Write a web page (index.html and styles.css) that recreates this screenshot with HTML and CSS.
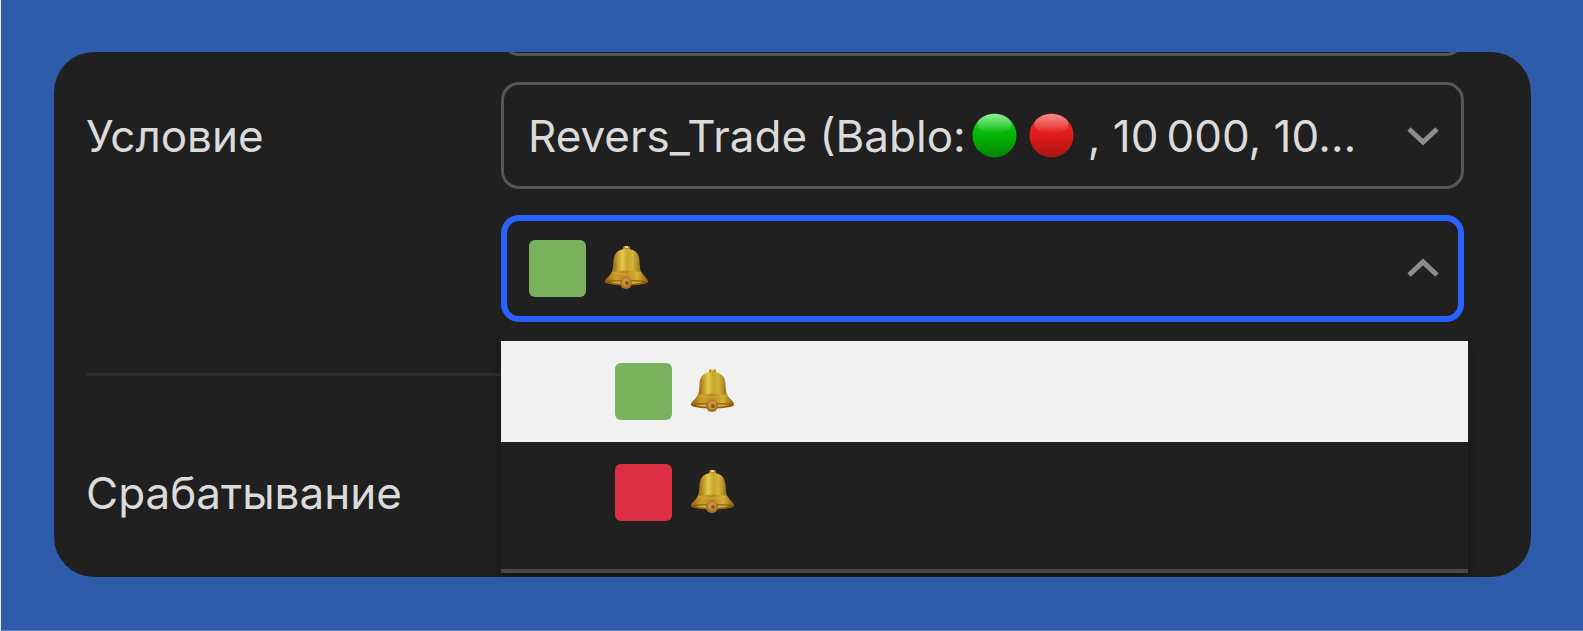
FILE: index.html
```html
<!DOCTYPE html>
<html lang="ru">
<head>
  <meta charset="UTF-8" />
  <meta name="viewport" content="width=device-width, initial-scale=1.0" />
  <title>Условие</title>
  <link rel="stylesheet" href="styles.css">
</head>
<body>
  <!-- shared icons -->
  <svg class="sprite" width="0" height="0" aria-hidden="true">
    <defs>
      <linearGradient id="greenBall" x1="0" y1="0" x2="0" y2="1">
        <stop offset="0" stop-color="#2fe03a" />
        <stop offset="0.4" stop-color="#06b90a" />
        <stop offset="0.6" stop-color="#04ad04" />
        <stop offset="1" stop-color="#048404" />
      </linearGradient>
      <linearGradient id="redBall" x1="0" y1="0" x2="0" y2="1">
        <stop offset="0" stop-color="#f0302c" />
        <stop offset="0.5" stop-color="#e01c1a" />
        <stop offset="1" stop-color="#a91414" />
      </linearGradient>
      <linearGradient id="shine" x1="0" y1="0" x2="0" y2="1">
        <stop offset="0" stop-color="#fff" stop-opacity="0.45" />
        <stop offset="1" stop-color="#fff" stop-opacity="0" />
      </linearGradient>
      <linearGradient id="bellBody" x1="0" y1="0" x2="1" y2="0">
        <stop offset="0" stop-color="#8a5a0c" />
        <stop offset="0.22" stop-color="#a87a18" />
        <stop offset="0.4" stop-color="#e6cc48" />
        <stop offset="0.52" stop-color="#c9a42c" />
        <stop offset="0.64" stop-color="#d3b53a" />
        <stop offset="0.78" stop-color="#a98220" />
        <stop offset="1" stop-color="#7d560d" />
      </linearGradient>
      <linearGradient id="bellRim" x1="0" y1="0" x2="1" y2="0">
        <stop offset="0" stop-color="#94630f" />
        <stop offset="0.25" stop-color="#cf9d2a" />
        <stop offset="0.5" stop-color="#bb8a22" />
        <stop offset="0.75" stop-color="#d6ae33" />
        <stop offset="1" stop-color="#8a5f10" />
      </linearGradient>
      <symbol id="bell" viewBox="0 0 57 57">
        <rect x="25" y="6" width="7" height="6" rx="2" fill="#b98b20" />
        <rect x="27" y="6" width="3" height="2" fill="#f0d878" />
        <path d="M28.500 9C20 9 16 13 15.500 21C15 28 15 31 12 35C9.500 38 7 39.500 7 42C12 46 45 46 50 42C50 39.500 47.500 38 45 35C42 31 42 28 41.500 21C41 13 37 9 28.500 9Z" fill="url(#bellBody)" />
        <path d="M14 32Q28 29 43 32Q46 36 49 39Q50 41 50 42C44 46 13 46 7 42Q7 41 8 39Q12 36 14 32Z" fill="url(#bellRim)" />
        <path d="M14 32Q28 37 43 32" fill="none" stroke="#dcbc48" stroke-width="1" opacity="0.5" />
        <path d="M7 41Q28 39 50 41Q50 43 46 44Q28 47 11 44Q7 43 7 41Z" fill="#8a5c10" />
        <path d="M12 42Q28 40 45 42Q40 44 28 44Q16 44 12 42Z" fill="#ccab30" />
        <circle cx="28" cy="43" r="6" fill="#a97524" />
        <circle cx="28" cy="42" r="4" fill="#cc9440" />
        <circle cx="29" cy="43" r="2" fill="#85541a" />
      </symbol>
    </defs>
  </svg>

  <main class="panel">
    <div class="row condition">
      <label class="label" for="condition">Условие</label>
      <div class="fields">
        <button type="button" class="field" aria-label="Символ"></button>

        <button type="button" class="field" id="condition" aria-haspopup="listbox">
          <span class="value">
            <span>Revers_Trade (Bablo:</span>
            <svg class="emoji" viewBox="0 0 57 57">
              <circle cx="28.500" cy="28.500" r="22" fill="url(#greenBall)" />
              <ellipse cx="28.500" cy="17" rx="17" ry="10" fill="url(#shine)" />
            </svg>
            <svg class="emoji" viewBox="0 0 57 57">
              <circle cx="28.500" cy="28.500" r="22" fill="url(#redBall)" />
              <ellipse cx="28.500" cy="17" rx="17" ry="10" fill="url(#shine)" />
            </svg>
            <span class="tail">, 10&#8239;000, 10…</span>
          </span>
          <svg class="chevron" viewBox="0 0 32 18"><path d="M2 2L16 15L30 2" /></svg>
        </button>

        <div class="dropdown">
          <button type="button" class="field active" aria-label="Сигнал" aria-haspopup="listbox" aria-expanded="true">
            <span class="value signal">
              <span class="square green"></span>
              <svg class="emoji"><use href="#bell" /></svg>
            </span>
            <svg class="chevron" viewBox="0 0 32 18"><path d="M2 15L16 2L30 15" /></svg>
          </button>
          <ul class="menu" role="listbox" aria-label="Сигнал">
            <li class="option signal selected" role="option" aria-selected="true">
              <span class="square green"></span>
              <svg class="emoji"><use href="#bell" /></svg>
            </li>
            <li class="option signal" role="option" aria-selected="false">
              <span class="square red"></span>
              <svg class="emoji"><use href="#bell" /></svg>
            </li>
          </ul>
        </div>
      </div>
    </div>

    <hr class="divider">

    <div class="row trigger">
      <span class="label">Срабатывание</span>
    </div>
  </main>
</body>
</html>
```

FILE: styles.css
```css
* {
  box-sizing: border-box;
}

body {
  margin: 0;
  padding: 52px 52px 53px 53px;
  min-height: 100vh;
  background-color: #2f5bab;
  border-left: 1px solid #e9eef6;
  border-bottom: 1px solid #5f80bf;
  color: #dbdbdb;
  font-family: Inter, "Noto Sans", sans-serif;
  font-size: 44px;
  line-height: 56px;
}

.sprite {
  position: absolute;
}

.panel {
  background-color: #202020;
  border-radius: 40px;
  padding: 0 67px 0 32px;
  overflow: hidden;
}

.row {
  display: grid;
  grid-template-columns: 415px 1fr;
}

/* the field above is scrolled almost out of the panel */
.condition {
  margin-top: -103px;
}

.condition .label {
  margin-top: 159px;
}

.fields {
  display: flex;
  flex-direction: column;
  gap: 26px;
  min-width: 0;
}

.field {
  display: flex;
  align-items: center;
  justify-content: space-between;
  width: 100%;
  height: 107px;
  padding: 0 22px 0 24px;
  background-color: #202020;
  border: 3px solid #575757;
  border-radius: 18px;
  color: inherit;
  font: inherit;
  cursor: pointer;
}

.field.active {
  border: 6px solid #2962ff;
  padding: 0 19px 0 22px;
}

.value {
  display: flex;
  align-items: center;
  white-space: nowrap;
}

.tail {
  padding-left: 8px;
}

.signal {
  display: flex;
  align-items: center;
  gap: 12px;
}

.emoji {
  flex: none;
  width: 57px;
  height: 57px;
}

.square {
  width: 57px;
  height: 57px;
  border-radius: 6px;
}

.green {
  background-color: #7ab15d;
}

.red {
  background-color: #dd2f43;
}

.chevron {
  flex: none;
  width: 32px;
  height: 18px;
  overflow: visible;
  fill: none;
  stroke: #8c8c8c;
  stroke-width: 5px;
}

.dropdown {
  position: relative;
}

.menu {
  position: absolute;
  top: 108px;
  left: 0;
  right: -4px;
  margin: 0;
  padding: 18px 0 26px;
  list-style: none;
  background-color: #202020;
  border-bottom: 4px solid #484848;
  border-radius: 18px 18px 0 0;
  box-shadow: 0 6px 12px rgba(0, 0, 0, 0.4);
}

.option {
  height: 101px;
  padding-left: 114px;
  cursor: pointer;
}

.option.selected {
  background-color: #f1f1f1;
}

.divider {
  height: 3px;
  margin: 51px 0 0;
  border: none;
  background-color: #2e2e2e;
}

.trigger {
  padding: 89px 0 56px;
}
```
